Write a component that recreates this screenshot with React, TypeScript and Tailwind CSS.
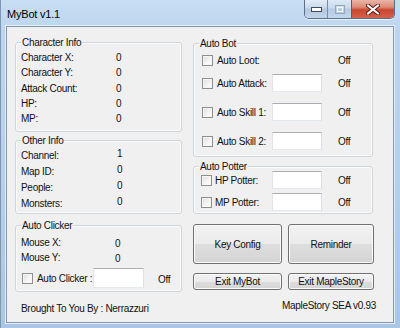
import React from 'react';

const ui = "font-['Liberation_Sans',Arial,sans-serif] text-[10px] tracking-[-0.3px] text-[#111]";

function GroupBox({ title, className, children }: { title: string; className: string; children?: React.ReactNode }) {
  return (
    <div className={`relative border border-[#cfd6dc] rounded-[3px] shadow-[inset_0_0_0_1px_#fbfbfb] ${className}`}>
      <span className="absolute -top-[7px] left-[5px] px-[1px] bg-[#f0f0f0] leading-[13px]">{title}</span>
      {children}
    </div>
  );
}

function Check() {
  return (
    <span className="w-[11px] h-[11px] shrink-0 border border-[#8e8f8f] bg-[linear-gradient(135deg,#dcdcdc_0%,#f4f4f4_55%,#ffffff_100%)] shadow-[inset_0_0_0_1px_#f6f6f6]" />
  );
}

function TextBox({ className }: { className: string }) {
  return (
    <span className={`block shrink-0 bg-white border border-[#abadb3] border-l-[#e2e3ea] border-r-[#dbdfe6] border-b-[#e3e9ef] ${className}`} />
  );
}

function Btn({ label, className }: { label: string; className: string }) {
  return (
    <button className={`flex items-center justify-center border border-[#707070] rounded-[3px] bg-[linear-gradient(to_bottom,#f2f2f2_0%,#ebebeb_50%,#dedede_50%,#d4d4d4_100%)] shadow-[inset_0_0_0_1px_#fbfbfb] leading-[13px] ${className}`}>
      {label}
    </button>
  );
}

const charInfo = [
  ['Character X:', '0'],
  ['Character Y:', '0'],
  ['Attack Count:', '0'],
  ['HP:', '0'],
  ['MP:', '0'],
];

const otherInfo = [
  ['Channel:', '1'],
  ['Map ID:', '0'],
  ['People:', '0'],
  ['Monsters:', '0'],
];

function BotRow({ label, input, className }: { label: string; input: boolean; className: string }) {
  return (
    <div className={`flex items-center h-[18px] pl-[8px] ${className}`}>
      <Check />
      <span className="ml-[4px] w-[55px] whitespace-nowrap leading-[13px]">{label}</span>
      {input ? <TextBox className="w-[50px] h-[18px]" /> : <span className="w-[50px]" />}
      <span className="ml-[16px] leading-[13px]">Off</span>
    </div>
  );
}

function PotRow({ label, className }: { label: string; className: string }) {
  return (
    <div className={`flex items-center h-[18px] pl-[7px] ${className}`}>
      <Check />
      <span className="ml-[3px] w-[57px] whitespace-nowrap leading-[13px]">{label}</span>
      <TextBox className="w-[50px] h-[18px]" />
      <span className="ml-[16px] leading-[13px]">Off</span>
    </div>
  );
}

function CaptionButtons() {
  return (
    <div className="flex h-[19px] mr-[5px] rounded-b-[5px] border border-t-0 border-[#5a6f8a] overflow-hidden shadow-[0_1px_0_#e6f0fa]">
      <div className="w-[23px] flex items-center justify-center bg-[linear-gradient(to_bottom,#e3ecf6_0%,#c9d9ea_45%,#b2c6de_50%,#c2d6ea_100%)] border-r border-[#7a8ea8]">
        <svg width="11" height="5" viewBox="0 0 11 5">
          <rect x="0.5" y="0.5" width="10" height="4" fill="#fff" stroke="#3a4c66" strokeWidth="1" />
        </svg>
      </div>
      <div className="w-[24px] flex items-center justify-center bg-[linear-gradient(to_bottom,#e3ecf6_0%,#c9d9ea_45%,#b2c6de_50%,#c2d6ea_100%)] border-r border-[#7a2a1f] opacity-80">
        <svg width="10" height="9" viewBox="0 0 10 9">
          <rect x="0.5" y="0.5" width="9" height="8" fill="none" stroke="#8a9ab0" strokeWidth="1" />
          <rect x="2.5" y="2.5" width="5" height="4" fill="none" stroke="#ffffff" strokeWidth="1" />
        </svg>
      </div>
      <div className="w-[42px] flex items-center justify-center bg-[linear-gradient(to_bottom,#eab5a8_0%,#dc8a76_40%,#c9452f_55%,#d5624a_100%)]">
        <svg width="14" height="11" viewBox="0 0 14 11">
          <path d="M2 1.5 L12 9.5 M12 1.5 L2 9.5" stroke="#5a1a12" strokeWidth="4" strokeLinecap="square" />
          <path d="M2 1.5 L12 9.5 M12 1.5 L2 9.5" stroke="#ffffff" strokeWidth="2" strokeLinecap="square" />
        </svg>
      </div>
    </div>
  );
}

export default function App() {
  return (
    <div className={`w-[400px] h-[328px] overflow-hidden flex flex-col border-l border-[#7d97b5] bg-[linear-gradient(180deg,#c7ddf2_0%,#bcd5ee_10%,#b4cfea_60%,#a9c6e4_100%)] ${ui}`}>
      {/* title bar */}
      <div className="h-[26px] flex items-start justify-between shrink-0">
        <span className="pl-[6px] pt-[8px] leading-[13px] text-[11px] tracking-[-0.2px] text-black">MyBot v1.1</span>
        <CaptionButtons />
      </div>

      {/* client area */}
      <div className="ml-[5px] w-[388px] h-[297px] border border-[#8397b0] bg-[#f0f0f0] shadow-[0_0_0_1px_#e4eef8] flex gap-[11px] pl-[8px]">
        {/* left column */}
        <div className="w-[167px] pt-[15px] flex flex-col">
          <GroupBox title="Character Info" className="h-[90px] pt-[7px] pl-[5px]">
            {charInfo.map(([k, v]) => (
              <div key={k} className="flex items-center h-[15.25px]">
                <span className="w-[95px] leading-[13px]">{k}</span>
                <span className="leading-[13px]">{v}</span>
              </div>
            ))}
          </GroupBox>

          <GroupBox title="Other Info" className="mt-[8px] h-[74px] pt-[6px] pl-[5px]">
            {otherInfo.map(([k, v]) => (
              <div key={k} className="flex items-center h-[16px]">
                <span className="w-[96px] leading-[13px]">{k}</span>
                <span className="leading-[13px] -mt-[3px]">{v}</span>
              </div>
            ))}
          </GroupBox>

          <GroupBox title="Auto Clicker" className="mt-[11px] h-[67px] pt-[9px] pl-[5px]">
            <div className="flex items-center h-[15px]">
              <span className="w-[94px] leading-[13px]">Mouse X:</span>
              <span className="leading-[13px] mt-[2px]">0</span>
            </div>
            <div className="flex items-center h-[15px]">
              <span className="w-[94px] leading-[13px]">Mouse Y:</span>
              <span className="leading-[13px] mt-[2px]">0</span>
            </div>
            <div className="flex items-center h-[20px] mt-[3px] pl-[1px]">
              <Check />
              <span className="ml-[4px] w-[56px] whitespace-nowrap leading-[13px]">Auto Clicker :</span>
              <TextBox className="w-[51px] h-[20px]" />
              <span className="ml-[14px] leading-[13px] mt-[2px]">Off</span>
            </div>
          </GroupBox>

          <span className="mt-[10px] pl-[6px] leading-[13px]">Brought To You By : Nerrazzuri</span>
        </div>

        {/* right column */}
        <div className="w-[184px] pt-[16px] flex flex-col">
          <GroupBox title="Auto Bot" className="w-[180px] h-[114px] pt-[7px]">
            <BotRow label="Auto Loot:" input={false} className="" />
            <BotRow label="Auto Attack:" input className="mt-[5px]" />
            <BotRow label="Auto Skill 1:" input className="mt-[11px]" />
            <BotRow label="Auto Skill 2:" input className="mt-[11px]" />
          </GroupBox>

          <GroupBox title="Auto Potter" className="mt-[9px] w-[180px] h-[48px] pt-[4px]">
            <PotRow label="HP Potter:" className="" />
            <PotRow label="MP Potter:" className="mt-[4px]" />
          </GroupBox>

          <div className="mt-[10px] flex gap-[6px]">
            <Btn label="Key Config" className="w-[89px] h-[40px]" />
            <Btn label="Reminder" className="w-[86px] h-[40px]" />
          </div>

          <div className="mt-[9px] flex gap-[6px]">
            <Btn label="Exit MyBot" className="w-[89px] h-[17px]" />
            <Btn label="Exit MapleStory" className="w-[86px] h-[17px]" />
          </div>

          <span className="mt-[9px] pr-[1px] text-right leading-[13px]">MapleStory SEA v0.93</span>
        </div>
      </div>
    </div>
  );
}
